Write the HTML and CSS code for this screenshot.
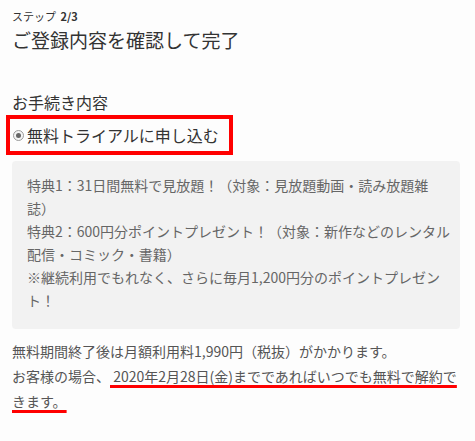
FILE: index.html
```html
<!DOCTYPE html>
<html lang="ja">
<head>
<meta charset="utf-8">
<link rel="stylesheet" href="styles.css">
</head>
<body>
<div class="page">
  <div class="step">ステップ <b>2/3</b></div>
  <h1 class="title">ご登録内容を確認して完了</h1>
  <div class="section-label">お手続き内容</div>
  <label class="choice">
    <span class="radio"><span class="dot"></span></span>
    <span class="choice-text">無料トライアルに申し込む</span>
  </label>
  <div class="benefits">
    特典1：31日間無料で見放題！（対象：見放題動画・読み放題雑<br>誌）<br>
    特典2：600円分ポイントプレゼント！（対象：新作などのレンタル<br>配信・コミック・書籍）<br>
    ※継続利用でもれなく、さらに毎月1,200円分のポイントプレゼン<br>ト！
  </div>
  <p class="notice">無料期間終了後は月額利用料1,990円（税抜）がかかります。<br>お客様の場合、<span class="mark"> 2020年2月28日(金)までであればいつでも無料で解約で<br>きます。</span></p>
</div>
</body>
</html>
```
FILE: styles.css
```css
html, body {
  margin: 0;
  padding: 0;
  background: #fdfdfd;
}
.page {
  padding: 8px 15px 0 12px;
  font-family: "Noto Sans CJK JP", "Noto Sans", sans-serif;
  color: #333;
}
.step {
  font-size: 11px;
  line-height: 16px;
  color: #333;
}
.step b {
  font-weight: 700;
  margin-left: 2px;
}
.title {
  margin: 3px 0 0;
  font-size: 19px;
  line-height: 26px;
  font-weight: 400;
  color: #333;
}
.section-label {
  margin-top: 38px;
  font-size: 16px;
  line-height: 22px;
  color: #333;
}
.choice {
  margin: 2px 0 0 -6px;
  width: 216px;
  height: 32px;
  border: 4px solid #ff0000;
  display: flex;
  align-items: center;
  padding-left: 3px;
  box-sizing: content-box;
}
.radio {
  width: 9px;
  height: 9px;
  border: 1px solid #9a9a9a;
  border-radius: 50%;
  background: #f4f4f4;
  display: flex;
  align-items: center;
  justify-content: center;
  flex: none;
}
.dot {
  width: 5px;
  height: 5px;
  border-radius: 50%;
  background: #666;
}
.choice-text {
  margin-left: 3px;
  font-size: 16px;
  line-height: 22px;
  color: #333;
}
.benefits {
  margin-top: 6px;
  width: 448px;
  box-sizing: border-box;
  padding: 13px 10px 17px 15px;
  background: #f2f2f2;
  border-radius: 4px;
  font-size: 14px;
  line-height: 23px;
  color: #666;
  white-space: nowrap;
}
.notice {
  margin: 10px 0 0;
  font-size: 14px;
  line-height: 25px;
  color: #555;
  white-space: nowrap;
}
.mark {
  text-decoration: underline;
  text-decoration-color: #ff0000;
  text-decoration-thickness: 3px;
  text-underline-offset: 3px;
}
```
